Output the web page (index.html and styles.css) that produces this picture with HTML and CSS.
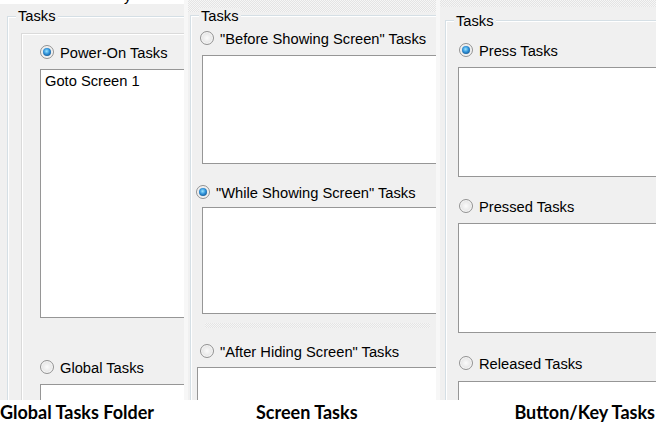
FILE: index.html
```html
<!DOCTYPE html>
<html lang="en">
<head>
    <meta charset="UTF-8">
    <title>Tasks</title>
    <link rel="stylesheet" href="styles.css">
</head>
<body>
    <div class="shots">
        <!-- Global tasks folder -->
        <section class="shot shot-folder">
            <div class="cut"><span>y</span></div>
            <div class="group">
                <span class="group-title">Tasks</span>
                <div class="page">
                    <label class="opt"><span class="radio on"></span>Power-On Tasks</label>
                    <div class="list list-folder">Goto Screen 1</div>
                    <label class="opt opt-global"><span class="radio"></span>Global Tasks</label>
                    <div class="list list-next"></div>
                </div>
            </div>
        </section>

        <!-- Screen tasks -->
        <section class="shot shot-screen">
            <div class="dots dots-screen"></div>
            <div class="group">
                <span class="group-title">Tasks</span>
                <label class="opt"><span class="radio"></span>"Before Showing Screen" Tasks</label>
                <div class="list list-before"></div>
                <label class="opt opt-while"><span class="radio on"></span>"While Showing Screen" Tasks</label>
                <div class="list list-while"></div>
                <div class="dots seam"></div>
                <label class="opt opt-after"><span class="radio"></span>"After Hiding Screen" Tasks</label>
                <div class="list list-after"></div>
            </div>
        </section>

        <!-- Button / key tasks -->
        <section class="shot shot-button">
            <div class="dots dots-button"></div>
            <div class="group">
                <span class="group-title">Tasks</span>
                <label class="opt"><span class="radio on"></span>Press Tasks</label>
                <div class="list list-press"></div>
                <label class="opt opt-pressed"><span class="radio"></span>Pressed Tasks</label>
                <div class="list list-press"></div>
                <label class="opt opt-released"><span class="radio"></span>Released Tasks</label>
                <div class="list list-released"></div>
            </div>
        </section>
    </div>

    <div class="captions">
        <div class="caption">Global Tasks Folder</div>
        <div class="caption">Screen Tasks</div>
        <div class="caption caption-right">Button/Key Tasks</div>
    </div>
</body>
</html>
```

FILE: styles.css
```css
body {
    margin: 0;
    width: 662px;
    height: 429px;
    overflow: hidden;
    background-color: #fff;
    color: #000;
    font-family: "Liberation Sans", Arial, sans-serif;
    font-size: 14.7px;
    line-height: 16px;
}

.shots {
    display: flex;
    gap: 4px;
    width: 656px;
    height: 400px;
    background-color: #f7f7f7; /* light seams between the screenshots */
}

.shot {
    display: flex;
    flex-direction: column;
    overflow: hidden;
    background-color: #f0f0f0;
}
.shot-folder { width: 184px; }
.shot-screen { width: 248px; }
.shot-button { width: 216px; }

/* nothing in the columns may squeeze, the bottom just gets clipped */
.shot > *, .group > *, .page > * {
    flex-shrink: 0;
}

/* clipped bit of the window above */
.cut {
    height: 4px;
    overflow: hidden;
    padding-left: 124px;
    background-color: #fff;
}
.cut span {
    display: block;
    margin-top: -12px;
}

.dots {
    background: repeating-conic-gradient(#e4e4e4 0 25%, #f6f6f6 0 50%) 0 0 / 2px 2px;
}
.dots-screen { height: 12px; }
.dots-button { height: 7px; }

/* group box */
.group {
    position: relative;
    display: flex;
    flex-direction: column;
    align-items: flex-start;
    flex: 1 0 auto;
    border-top: 1px solid #d5dfe5;
    border-left: 1px solid #d5dfe5;
    box-shadow: inset 1px 1px 0 #fff;
}
.group-title {
    position: absolute;
    top: -8px;
    left: 8px;
    padding: 0 2px;
    background-color: #f0f0f0;
}

.shot-folder .group {
    margin: 12px 0 0 7px;
}
.shot-folder .group-title {
    top: -9px;
}
.shot-screen .group {
    margin: 3px 0 0 2px;
    padding: 15px 0 0 9px;
}
.shot-button .group {
    margin: 13px 0 0 5px;
    padding: 22px 0 0 13px;
}

/* inner page of the folder dialog */
.page {
    display: flex;
    flex-direction: column;
    align-items: flex-start;
    flex: 1 0 auto;
    align-self: stretch;
    margin: 16px 0 0 13px;
    padding: 11px 0 0 18px;
    border-top: 1px solid #dadada;
    border-left: 1px solid #dadada;
    box-shadow: inset 1px 1px 0 #fff;
}

/* radio options */
.opt {
    display: flex;
    align-items: center;
    gap: 6px;
    height: 16px;
    white-space: nowrap;
}
.radio {
    position: relative;
    flex: none;
    box-sizing: border-box;
    width: 14px;
    height: 14px;
    margin-top: -2px;
    border: 1px solid #939393;
    border-radius: 50%;
    background: radial-gradient(circle at 50% 50%, #fbfbfb 0, #eaeaea 50%, #cfcfcf 100%);
    box-shadow: inset 0 0 0 1px #f8f8f8;
}
.radio.on::after {
    content: '';
    position: absolute;
    inset: 2px;
    border-radius: 50%;
    background: radial-gradient(circle at 45% 40%, #9ce6ff 0, #2e90d8 45%, #0c3a68 100%);
}

/* list boxes */
.list {
    box-sizing: border-box;
    width: 300px;
    margin-top: 8px;
    padding: 3px 4px;
    border: 1px solid #969696;
    border-right: none;
    background-color: #fff;
    white-space: nowrap;
}

.list-folder { height: 249px; }
.opt-global { margin-top: 42px; }
.list-next { height: 60px; }

.list-before { margin-left: 2px; height: 109px; }
.opt-while { margin: 21px 0 0 -4px; }
.list-while { margin: 6px 0 0 2px; height: 107px; }
.seam { width: 225px; height: 5px; margin: 9px 0 0 5px; }
.opt-after { margin-top: 16px; }
.list-after { margin: 7px 0 0 -3px; height: 60px; }

.list-press { margin-left: -1px; height: 110px; }
.opt-pressed { margin-top: 22px; }
.opt-released { margin-top: 23px; }
.list-released { margin: 9px 0 0 -1px; height: 60px; }

/* captions under the screenshots */
.captions {
    display: grid;
    grid-template-columns: 256px 256px 1fr;
    padding-right: 7px;
    font-family: Lato, "Liberation Sans", sans-serif;
    font-weight: 700;
    font-size: 18px;
    line-height: 25px;
}
.caption-right {
    justify-self: end;
}
```
